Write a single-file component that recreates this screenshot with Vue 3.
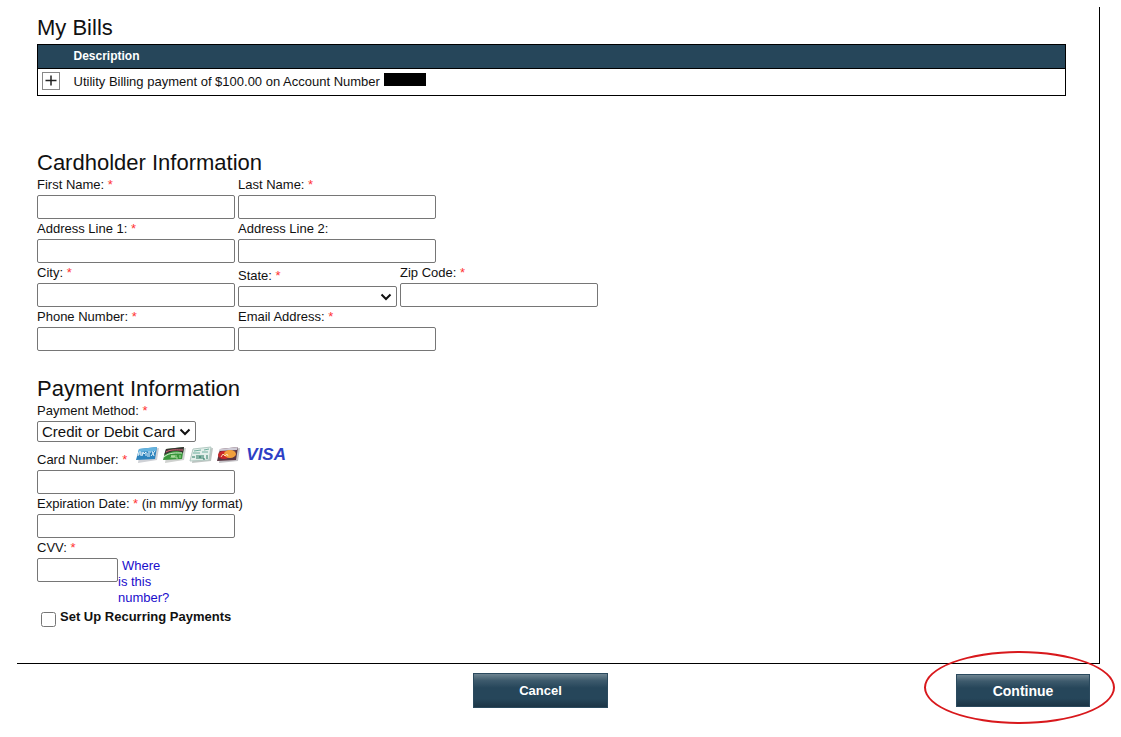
<script setup>
import { ref } from 'vue'

const rows = [
  [
    { id: 'first-name', label: 'First Name:', required: true },
    { id: 'last-name', label: 'Last Name:', required: true },
  ],
  [
    { id: 'address-1', label: 'Address Line 1:', required: true },
    { id: 'address-2', label: 'Address Line 2:', required: false },
  ],
  [
    { id: 'city', label: 'City:', required: true },
    { id: 'state', label: 'State:', required: true, select: true },
    { id: 'zip', label: 'Zip Code:', required: true },
  ],
  [
    { id: 'phone', label: 'Phone Number:', required: true },
    { id: 'email', label: 'Email Address:', required: true },
  ],
]
const form = ref({})
const method = ref('card')
const recurring = ref(false)
</script>

<template>
  <form class="page" @submit.prevent>
    <main class="panel">
      <h2>My Bills</h2>
      <table class="bills">
        <thead>
          <tr>
            <th class="toggle"></th>
            <th>Description</th>
          </tr>
        </thead>
        <tbody>
          <tr>
            <td class="toggle">
              <button type="button" class="expand" aria-label="Expand bill">
                <svg viewBox="0 0 16 16" width="16" height="16"><path d="M2.5 7.5H13.5M8 2.5V12.5" /></svg>
              </button>
            </td>
            <td>Utility Billing payment of $100.00 on Account Number <span class="redacted"></span></td>
          </tr>
        </tbody>
      </table>

      <section class="cardholder">
        <h2>Cardholder Information</h2>
        <div v-for="(row, i) in rows" :key="i" class="row">
          <div v-for="f in row" :key="f.id" class="field">
            <label :for="f.id">{{ f.label }} <span v-if="f.required" class="req">*</span></label>
            <span v-if="f.select" class="select">
              <select :id="f.id" v-model="form[f.id]"></select>
              <svg viewBox="0 0 12 8" width="12" height="8"><path d="M1.5 1.5L6 6L10.5 1.5" /></svg>
            </span>
            <input v-else :id="f.id" v-model="form[f.id]" type="text" />
          </div>
        </div>
      </section>

      <section class="payment">
        <h2>Payment Information</h2>
        <div class="field">
          <label for="method">Payment Method: <span class="req">*</span></label>
          <span class="select">
            <select id="method" v-model="method">
              <option value="card">Credit or Debit Card</option>
            </select>
            <svg viewBox="0 0 12 8" width="12" height="8"><path d="M1.5 1.5L6 6L10.5 1.5" /></svg>
          </span>
        </div>
        <div class="field">
          <div class="card-label">
            <label for="card-number">Card Number: <span class="req">*</span></label>
            <div class="brands">
              <svg viewBox="0 0 24 18" width="24" height="18">
                <path d="M5 4L24 2L22 14L3 17Z" fill="#cfd1d6" />
                <path d="M4 3L22 1L20 13L1 14Z" fill="#2c83bd" />
                <path d="M4 3L22 1L21 5L3 6Z" fill="#65b3de" />
                <path d="M3 10L4 6L6 6L6 10M4 8H6M7 10L8 6L9 8L11 6L11 10M13 6H16M12 8H15M12 10H15M16 10L20 5M17 5L19 10" stroke="#e4f3fb" fill="none" />
              </svg>
              <svg viewBox="0 0 24 18" width="24" height="18">
                <path d="M5 4L24 2L22 14L3 17Z" fill="#cfd1cf" />
                <path d="M4 3L22 1L20 13L1 14Z" fill="#39963b" />
                <path d="M4 3L22 1L21 7C14 3 8 6 2 9Z" fill="#3b3035" />
                <path d="M4 6C9 3 15 4 21 4" stroke="#d76b72" fill="none" />
                <path d="M2 11C7 6 15 7 20 7" stroke="#d5efcf" fill="none" />
                <path d="M9 12L10 9L11 12L12 9L13 12M14 9V12H16M18 9V12" stroke="#a9dc9c" fill="none" />
              </svg>
              <svg viewBox="0 0 24 18" width="24" height="18">
                <path d="M5 4L24 2L22 15L3 17Z" fill="#bfc5c3" />
                <path d="M4 3L22 1L20 14L1 15Z" fill="#e3efea" stroke="#b3c9c2" />
                <path d="M5 5L12 4M15 4L20 3M4 7H11M13 6H19" stroke="#6fae9d" fill="none" />
                <path d="M3 11H6M8 9V13M10 9V13M10 11H12M12 9V13M14 9V13H16M18 9V13" stroke="#26775f" fill="none" />
              </svg>
              <svg viewBox="0 0 24 18" width="24" height="18">
                <path d="M5 4L24 2L22 15L3 17Z" fill="#c4c3c7" />
                <path d="M4 3L22 1L20 14L1 15Z" fill="#5b3440" />
                <path d="M4 3L22 1L21 4L3 5Z" fill="#cfcbd6" />
                <ellipse cx="8" cy="9" rx="6" ry="4" fill="#c9272a" />
                <ellipse cx="14" cy="8" rx="6" ry="4" fill="#f3a03c" />
                <path d="M5 11L7 8L9 10L11 8L12 10" stroke="#fbd9b0" fill="none" />
              </svg>
              <span class="visa">VISA</span>
            </div>
          </div>
          <input id="card-number" v-model="form.card" type="text" />
        </div>
        <div class="field">
          <label for="expiration">Expiration Date: <span class="req">*</span> (in mm/yy format)</label>
          <input id="expiration" v-model="form.expiration" type="text" />
        </div>
        <div class="field">
          <label for="cvv">CVV: <span class="req">*</span></label>
          <div class="cvv">
            <input id="cvv" v-model="form.cvv" type="text" />
            <a href="#">Where is this number?</a>
          </div>
        </div>
        <div class="recurring">
          <input id="recurring" v-model="recurring" type="checkbox" />
          <label for="recurring">Set Up Recurring Payments</label>
        </div>
      </section>
    </main>

    <footer class="actions">
      <button type="button" class="btn cancel">Cancel</button>
      <div class="next">
        <button type="submit" class="btn continue">Continue</button>
        <span class="ring"></span>
      </div>
    </footer>
  </form>
</template>

<style>
body {
  background: #fff;
}
</style>

<style scoped>
* {
  box-sizing: border-box;
}
.page {
  padding-top: 7px;
  font: 13px/16px "Liberation Sans", Arial, sans-serif;
  color: #111;
}
.panel {
  margin: 0 21px 0 17px;
  padding: 9px 33px 36px 20px;
  border-right: 1px solid #000;
  border-bottom: 1px solid #000;
}
h2 {
  margin: 0;
  font-size: 22px;
  line-height: 24px;
  font-weight: 400;
}
.bills {
  width: 100%;
  margin-top: 4px;
  border-collapse: collapse;
  border: 1px solid #000;
}
th {
  height: 24px;
  padding: 0 0 2px;
  background: #26465a;
  border-bottom: 1px solid #000;
  color: #fff;
  font-size: 12px;
  text-align: left;
}
td {
  height: 27px;
  padding: 0 0 2px;
}
.toggle {
  width: 36px;
  padding-left: 4px;
}
.expand {
  display: block;
  width: 18px;
  height: 18px;
  padding: 0;
  border: 1px solid #888;
  background: #fff;
}
.expand svg {
  display: block;
}
.expand path {
  fill: none;
  stroke: #222;
  stroke-width: 1.5;
}
.redacted {
  display: inline-block;
  width: 42px;
  height: 13px;
  background: #000;
}
.cardholder {
  margin-top: 55px;
}
.payment {
  margin-top: 26px;
}
.row {
  display: flex;
  align-items: flex-end;
  gap: 3px;
}
.field > label {
  display: block;
  line-height: 20px;
}
.req {
  color: #f33;
}
input[type="text"] {
  display: block;
  width: 198px;
  height: 24px;
  border: 1px solid #767676;
  border-radius: 2px;
  background: #fff;
}
.select {
  display: block;
  position: relative;
  width: 159px;
}
select {
  display: block;
  width: 100%;
  height: 21px;
  padding: 0 4px;
  appearance: none;
  border: 1px solid #767676;
  border-radius: 2px;
  background: #fff;
  color: #111;
  font: 15px/18px "Liberation Sans", Arial, sans-serif;
}
.select svg {
  position: absolute;
  right: 5px;
  top: 7px;
  pointer-events: none;
}
.select path {
  fill: none;
  stroke: #111;
  stroke-width: 2;
}
.card-label {
  display: flex;
  align-items: flex-end;
  gap: 8px;
  height: 28px;
  padding-bottom: 2px;
}
.brands {
  display: flex;
  gap: 3px;
  padding-bottom: 4px;
}
.visa {
  padding-left: 3px;
  color: #2d3fc5;
  font-size: 17px;
  line-height: 18px;
  font-weight: 700;
  font-style: italic;
}
.cvv {
  display: flex;
  align-items: flex-start;
}
.cvv input {
  width: 81px;
}
.cvv a {
  width: 53px;
  color: #1a0dcc;
  text-decoration: none;
  text-indent: 4px;
}
.recurring {
  display: flex;
  align-items: flex-start;
  gap: 4px;
  margin-top: 3px;
  padding-left: 4px;
  font-weight: 700;
}
.recurring input {
  width: 15px;
  height: 15px;
  margin: 3px 0 0;
}
.actions {
  display: grid;
  grid-template-columns: 473fr 135px 482fr;
  align-items: center;
  padding: 9px 31px 29px 0;
}
.btn {
  padding: 0;
  border: 1px solid #2b4a5e;
  background: linear-gradient(#6d8491, #3d5a6c 20%, #26465a 42%, #26465a 75%, #1c3545);
  color: #fff;
  font: 700 13px/16px "Liberation Sans", Arial, sans-serif;
}
.cancel {
  grid-column: 2;
  height: 35px;
}
.next {
  position: relative;
  justify-self: end;
}
.continue {
  display: block;
  width: 134px;
  height: 33px;
  font-size: 14px;
}
.ring {
  position: absolute;
  inset: -23px -25px -17px -32px;
  border: 2px solid #d8181c;
  border-radius: 50%;
  pointer-events: none;
}
</style>
